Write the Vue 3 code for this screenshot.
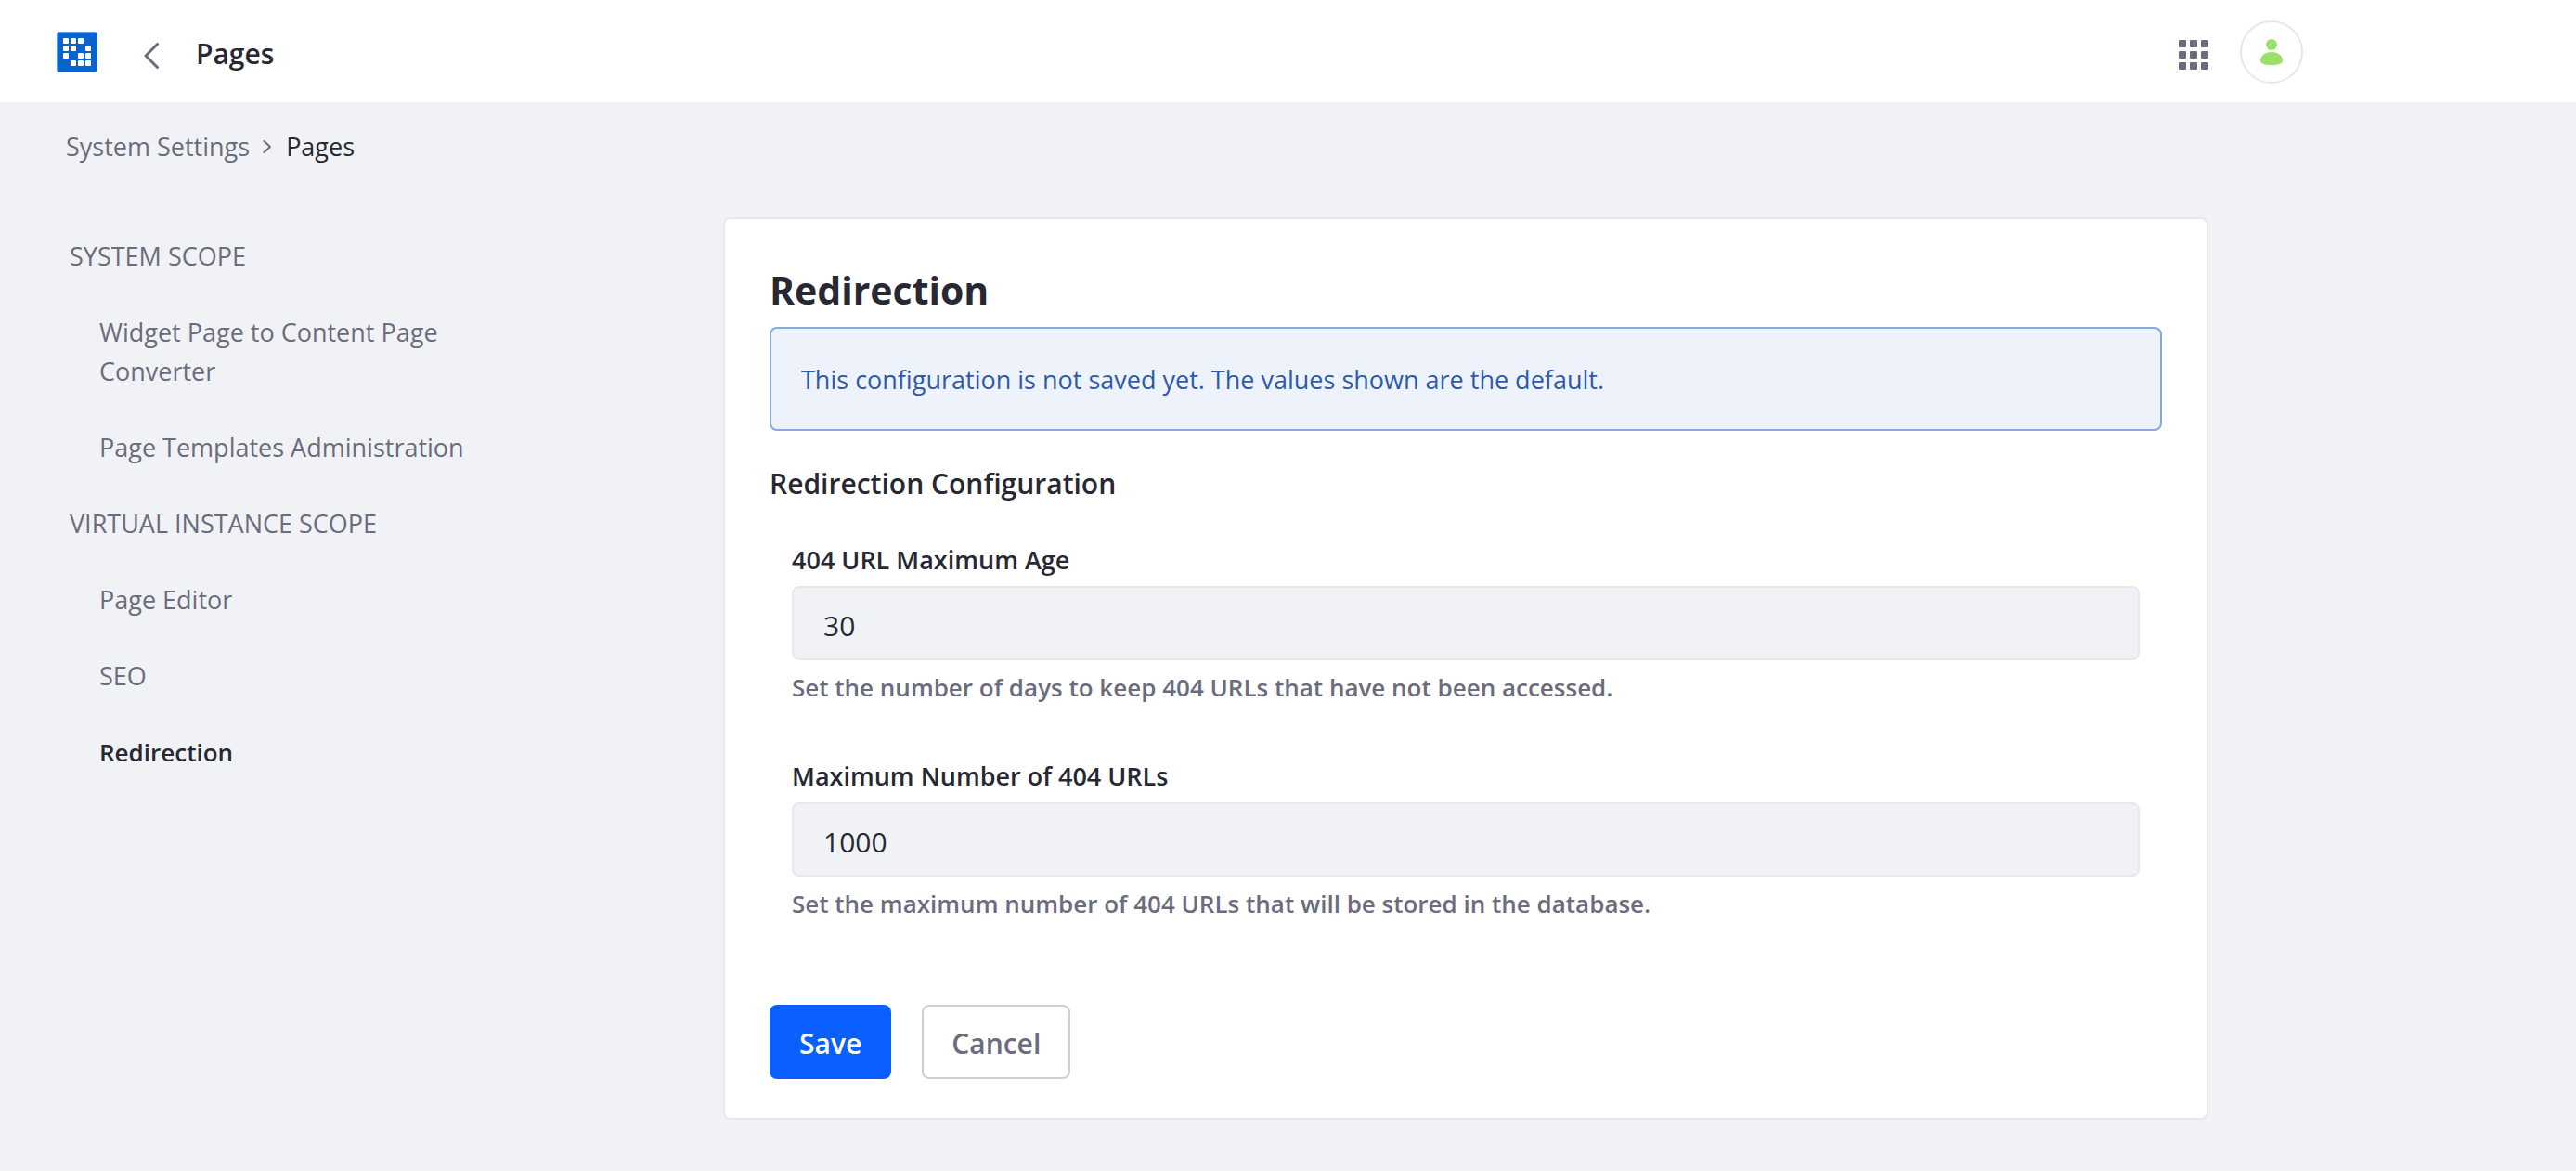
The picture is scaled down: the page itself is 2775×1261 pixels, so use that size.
<script setup>
import { reactive } from 'vue'

const logoCells = [
  [0, 0], [1, 0], [2, 0],
  [0, 1], [1, 1], [3, 1],
  [0, 2], [2, 2], [3, 2],
  [1, 3], [2, 3], [3, 3],
]

const scopes = [
  {
    title: 'System Scope',
    items: [
      { label: 'Widget Page to Content Page Converter' },
      { label: 'Page Templates Administration' },
    ],
  },
  {
    title: 'Virtual Instance Scope',
    items: [
      { label: 'Page Editor' },
      { label: 'SEO' },
      { label: 'Redirection', active: true },
    ],
  },
]

const fields = reactive([
  {
    id: 'max-age',
    label: '404 URL Maximum Age',
    value: '30',
    help: 'Set the number of days to keep 404 URLs that have not been accessed.',
  },
  {
    id: 'max-number',
    label: 'Maximum Number of 404 URLs',
    value: '1000',
    help: 'Set the maximum number of 404 URLs that will be stored in the database.',
  },
])
</script>

<template>
  <div class="page">
    <header class="topbar">
      <a class="logo" href="#" aria-label="Home">
        <svg width="44" height="44" viewBox="0 0 44 44">
          <rect width="44" height="44" rx="3" fill="#5c9be6" />
          <rect x="1" y="1" width="42" height="42" rx="2" fill="#0b63ce" />
          <rect
            v-for="([col, row], i) in logoCells"
            :key="i"
            :x="7 + col * 8"
            :y="7 + row * 8"
            width="6"
            height="6"
            rx="1"
            fill="#fff"
          />
        </svg>
      </a>
      <a class="back" href="#" aria-label="Back">
        <svg width="16" height="28" viewBox="0 0 16 28" fill="none" stroke="#6b6c7e" stroke-width="3" stroke-linecap="round" stroke-linejoin="round">
          <path d="M14.5 1.5 2 14l12.5 12.5" />
        </svg>
      </a>
      <h1 class="topbar-title">Pages</h1>
      <button class="apps" type="button" aria-label="Applications">
        <svg width="32" height="32" viewBox="0 0 32 32" fill="#6b6c7e">
          <template v-for="row in 3" :key="row">
            <rect
              v-for="col in 3"
              :key="col"
              :x="(col - 1) * 12"
              :y="(row - 1) * 12"
              width="8"
              height="8"
              rx="1"
            />
          </template>
        </svg>
      </button>
      <button class="avatar" type="button" aria-label="User profile">
        <svg width="24" height="28" viewBox="0 0 24 28" fill="#9be169">
          <circle cx="12" cy="6" r="6" />
          <path d="M12 14c7 0 12 4 12 9 0 4-5 5-12 5S0 27 0 23c0-5 5-9 12-9z" />
        </svg>
      </button>
    </header>

    <nav class="breadcrumb" aria-label="Breadcrumb">
      <a href="#">System Settings</a>
      <svg width="10" height="16" viewBox="0 0 10 16" fill="none" stroke="#6b6c7e" stroke-width="2" stroke-linecap="round" stroke-linejoin="round">
        <path d="M1.5 2 8 8l-6.500 6" />
      </svg>
      <span class="current">Pages</span>
    </nav>

    <div class="layout">
      <nav class="sidebar" aria-label="Configuration scopes">
        <section v-for="scope in scopes" :key="scope.title" class="scope">
          <h2>{{ scope.title }}</h2>
          <ul>
            <li v-for="item in scope.items" :key="item.label">
              <a href="#" :class="{ active: item.active }">{{ item.label }}</a>
            </li>
          </ul>
        </section>
      </nav>

      <main>
        <form class="card" @submit.prevent>
          <h2 class="card-title">Redirection</h2>
          <div class="alert" role="status">
            This configuration is not saved yet. The values shown are the default.
          </div>
          <h3 class="section-title">Redirection Configuration</h3>
          <div class="fields">
            <div v-for="field in fields" :key="field.id" class="field">
              <label :for="field.id">{{ field.label }}</label>
              <input :id="field.id" v-model="field.value" type="text" :aria-describedby="field.id + '-help'" />
              <p :id="field.id + '-help'">{{ field.help }}</p>
            </div>
          </div>
          <div class="actions">
            <button class="btn primary" type="submit">Save</button>
            <button class="btn secondary" type="button">Cancel</button>
          </div>
        </form>
      </main>
    </div>
  </div>
</template>

<style>
body {
  background: #f1f2f5;
}
</style>

<style scoped>
.page {
  font-family: "Open Sans", "Noto Sans", sans-serif;
  font-size: 27px;
  line-height: 42px;
  color: #272833;
}

.page *,
.page {
  box-sizing: border-box;
}

h1,
h2,
h3,
p,
ul {
  margin: 0;
  padding: 0;
}

a {
  color: inherit;
  text-decoration: none;
}

svg {
  display: block;
}

.topbar {
  display: flex;
  align-items: center;
  height: 110px;
  padding: 2px 294px 0 61px;
  background: #fff;
}

.back {
  margin: 8px 40px 0 50px;
}

.topbar-title {
  padding-top: 4px;
  font-size: 30px;
  font-weight: 600;
}

.apps {
  margin: 6px 34px 0 auto;
  padding: 0;
  border: 0;
  background: none;
}

.avatar {
  display: grid;
  place-items: center;
  width: 68px;
  height: 68px;
  padding: 0;
  border: 2px solid #e7e7ed;
  border-radius: 50%;
  background: #fff;
}

.breadcrumb {
  display: flex;
  align-items: center;
  padding: 27px 71px 55px;
  color: #6b6c7e;
}

.breadcrumb svg {
  margin: 0 15px 0 14px;
}

.breadcrumb .current {
  color: #272833;
}

.layout {
  display: grid;
  grid-template-columns: 430px minmax(0, 1fr);
  column-gap: 274px;
  padding: 0 396px 55px 75px;
}

.sidebar {
  display: flex;
  flex-direction: column;
  gap: 40px;
  padding-top: 21px;
  color: #6b6c7e;
}

.scope h2 {
  font-size: 27px;
  font-weight: 400;
  text-transform: uppercase;
}

.scope ul {
  display: flex;
  flex-direction: column;
  gap: 40px;
  padding: 40px 0 0 32px;
  list-style: none;
}

.scope a {
  display: block;
}

.scope .active {
  font-size: 26px;
  font-weight: 600;
  color: #272833;
}

.card {
  padding: 50px 48px 42px;
  border: 2px solid #e7e7ed;
  border-radius: 8px;
  background: #fff;
}

.card-title {
  font-size: 41px;
  line-height: 52px;
  font-weight: 700;
}

.alert {
  margin-top: 14px;
  padding: 34px 32px 32px;
  border: 2px solid #89a7e0;
  border-radius: 8px;
  background: #eef2fa;
  color: #2e5aac;
}

.section-title {
  margin-top: 36px;
  font-size: 30px;
  font-weight: 600;
}

.fields {
  display: flex;
  flex-direction: column;
  gap: 53px;
  padding: 40px 24px 87px;
}

.field {
  display: flex;
  flex-direction: column;
  gap: 8px;
  font-weight: 600;
}

.field label {
  margin-bottom: -1px;
}

.field input {
  width: 100%;
  height: 80px;
  padding: 4px 32px 0;
  border: 2px solid #e7e7ed;
  border-radius: 8px;
  background: #f1f2f5;
  color: #272833;
  font-family: inherit;
  font-size: 30px;
}

.field p {
  margin-bottom: 1px;
  font-size: 26px;
  color: #6b6c7e;
}

.actions {
  display: flex;
  gap: 33px;
}

.btn {
  height: 80px;
  padding: 2px 30px 0;
  border: 2px solid #0b5fff;
  border-radius: 8px;
  font-family: inherit;
  font-size: 30px;
  font-weight: 600;
}

.primary {
  background: #0b5fff;
  color: #fff;
}

.secondary {
  border-color: #cdced9;
  background: #fff;
  color: #6b6c7e;
}
</style>
